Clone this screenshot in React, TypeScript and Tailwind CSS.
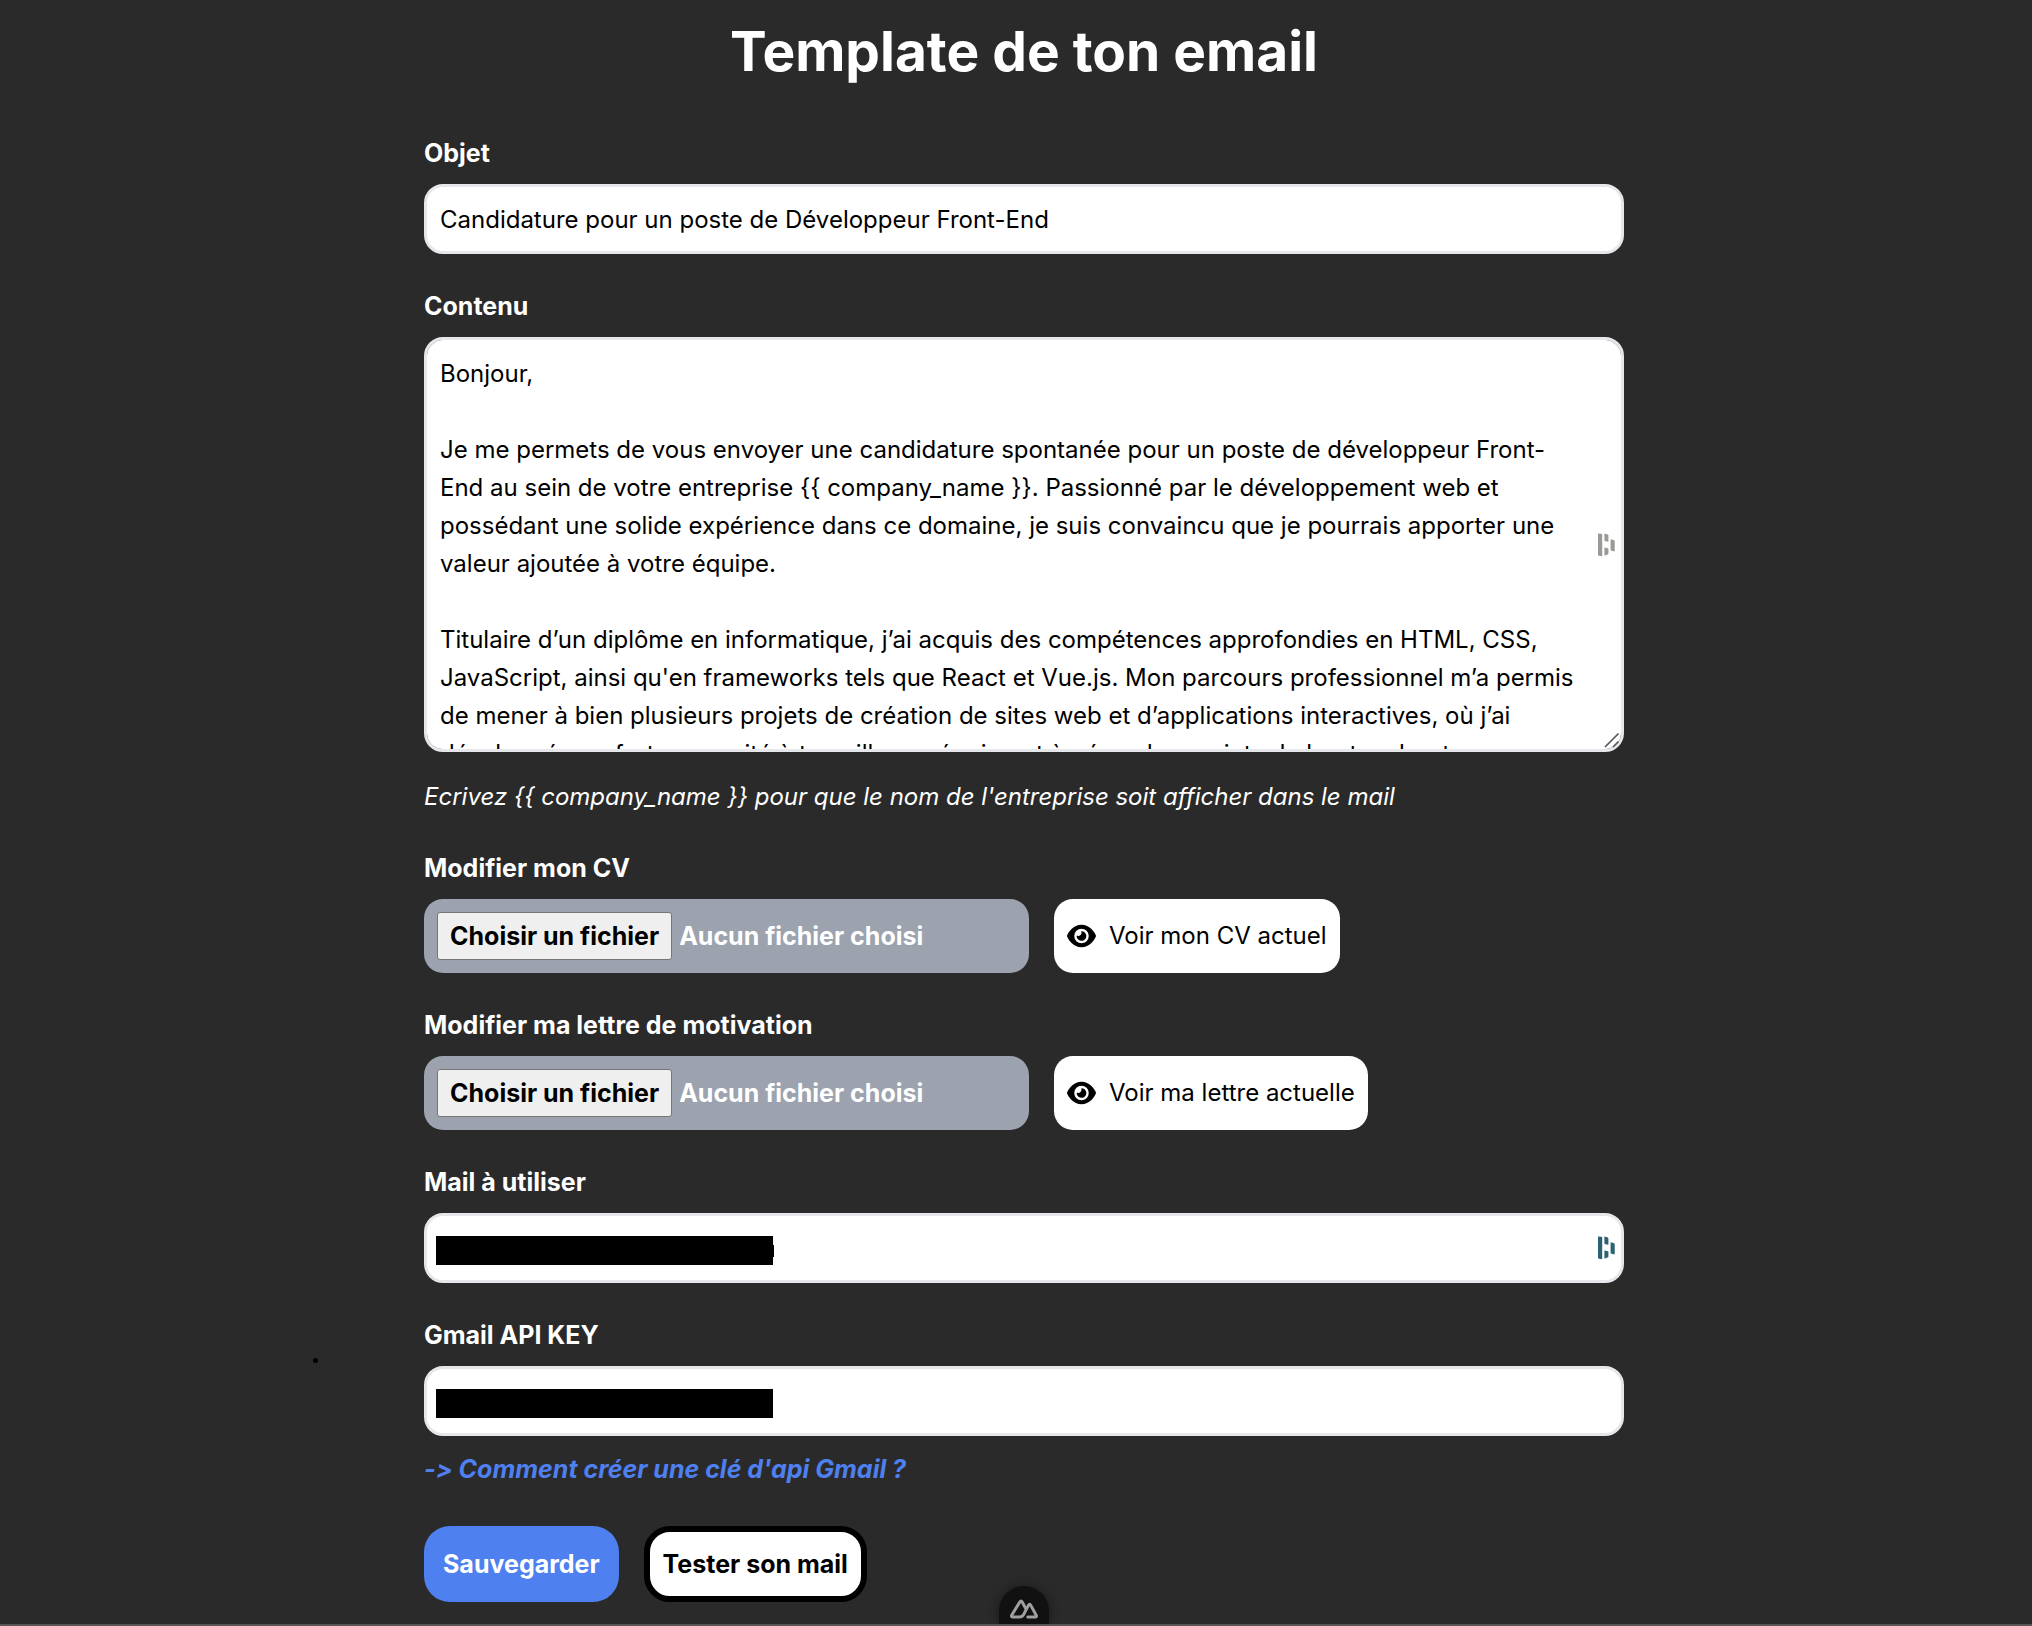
import React from "react";
import { FaEye } from "react-icons/fa6";

const MESSAGE = `Bonjour,

Je me permets de vous envoyer une candidature spontanée pour un poste de développeur Front-End au sein de votre entreprise {{ company_name }}. Passionné par le développement web et possédant une solide expérience dans ce domaine, je suis convaincu que je pourrais apporter une valeur ajoutée à votre équipe.

Titulaire d’un diplôme en informatique, j’ai acquis des compétences approfondies en HTML, CSS, JavaScript, ainsi qu'en frameworks tels que React et Vue.js. Mon parcours professionnel m’a permis de mener à bien plusieurs projets de création de sites web et d’applications interactives, où j’ai développé une forte capacité à travailler en équipe et à gérer des projets de bout en bout.`;

function PasswordManagerMark({ className }: { className: string }) {
  return (
    <svg viewBox="0 0 17 24" fill="currentColor" aria-hidden="true" className={`pointer-events-none absolute right-[9px] h-6 w-[17px] ${className}`}>
      <path d="M0 0.4L3 0.8C3.7 0.9 4.2 1.2 4.2 1.8V23.2L1 22.8C0.4 22.7 0 22.4 0 21.8Z" />
      <path d="M6.4 0.6L9.2 1.3C10 1.5 10.4 1.9 10.4 2.6V8.8L7.4 8.3C6.8 8.2 6.4 7.8 6.4 7.2Z" />
      <path d="M6.4 14.6L9.2 15.1C10 15.3 10.4 15.7 10.4 16.3V21L7.4 22.6L6.4 22.2Z" />
      <path d="M12.6 6.2L15.6 6.9C16.3 7.1 16.7 7.5 16.7 8.2V18.4L13.6 17.8C13 17.7 12.6 17.3 12.6 16.7Z" />
    </svg>
  );
}

const fieldClass =
  "block w-full rounded-[19px] border-[3px] border-[#e5e7eb] bg-white pl-[13px] text-[24px] leading-[38px] text-black outline-none";

function TextField({
  id,
  label,
  value,
  children,
}: {
  id: string;
  label: string;
  value?: string;
  children?: React.ReactNode;
}) {
  return (
    <div className="flex flex-col gap-3">
      <label htmlFor={id} className="font-bold">
        {label}
      </label>
      <div className="relative flex items-center">
        <input id={id} type="text" defaultValue={value} className={`${fieldClass} h-[70px] pr-[13px]`} />
        {children}
      </div>
    </div>
  );
}

function FileField({ id, label, action }: { id: string; label: string; action: string }) {
  return (
    <div className="flex flex-col gap-3">
      <label htmlFor={id} className="font-bold">
        {label}
      </label>
      <div className="flex gap-[25px]">
        <label
          htmlFor={id}
          className="flex w-[605px] cursor-pointer items-center gap-[7px] rounded-[19px] bg-[#9ca3af] px-[13px] py-[13px] font-bold"
        >
          <input id={id} type="file" className="sr-only" />
          <span className="rounded-[3px] border border-[#767676] bg-[#efefef] px-3 py-1 text-black">
            Choisir un fichier
          </span>
          <span>Aucun fichier choisi</span>
        </label>
        <button
          type="button"
          className="flex cursor-pointer items-center gap-[13px] rounded-[19px] bg-white px-[13px] text-[24px] text-black"
        >
          <FaEye className="h-[26px] w-[29px]" />
          {action}
        </button>
      </div>
    </div>
  );
}

function Redaction({ children }: { children?: React.ReactNode }) {
  return (
    <span className="pointer-events-none absolute top-[23px] left-3 flex h-[29px] w-[337px] items-center bg-black">
      {children}
    </span>
  );
}

export default function App() {
  return (
    <div className="relative min-h-screen overflow-hidden border-b-2 border-[#555555] bg-[#2a2a2a] pl-4 font-['Inter',sans-serif] text-[25px] leading-[38px] text-white [font-variant-ligatures:no-contextual]">
      <main className="mx-auto max-w-[1200px] pt-[19px] pb-[21px]">
        <h1 className="mb-[51px] text-center text-[55px] leading-[64px] font-bold">
          Template de ton email
        </h1>
        <form className="flex flex-col gap-[33px]" onSubmit={(e) => e.preventDefault()}>
          <TextField id="subject" label="Objet" value="Candidature pour un poste de Développeur Front-End" />

          <div className="flex flex-col gap-3">
            <label htmlFor="content" className="font-bold">
              Contenu
            </label>
            <div className="relative flex items-center">
              <textarea
                id="content"
                defaultValue={MESSAGE}
                aria-describedby="content-hint"
                className={`${fieldClass} h-[415px] resize-none pt-[15px] pr-10 [scrollbar-width:none]`}
              />
              <PasswordManagerMark className="text-[#9b9996]" />
              <svg
                viewBox="0 0 16 16"
                fill="none"
                stroke="#555555"
                strokeWidth="1.6"
                aria-hidden="true"
                className="pointer-events-none absolute right-1 bottom-1 size-4"
              >
                <path d="M1 15L14.5 1.5M9 15L14.5 9.5" />
              </svg>
            </div>
            <p id="content-hint" className="mt-[14px] text-[24px] italic">
              {"Ecrivez {{ company_name }} pour que le nom de l'entreprise soit afficher dans le mail"}
            </p>
          </div>

          <FileField id="cv" label="Modifier mon CV" action="Voir mon CV actuel" />
          <FileField id="letter" label="Modifier ma lettre de motivation" action="Voir ma lettre actuelle" />

          <TextField id="mail" label="Mail à utiliser">
            <Redaction>
              <span className="ml-auto h-3 w-px translate-x-full bg-black" />
            </Redaction>
            <PasswordManagerMark className="text-[#2b6173]" />
          </TextField>

          <div className="flex flex-col gap-[14px]">
            <TextField id="api-key" label="Gmail API KEY">
              <Redaction />
            </TextField>
            <a href="#api-key-help" className="self-start font-bold text-[#4f80f0] italic">
              {"-> Comment créer une clé d'api Gmail ?"}
            </a>
          </div>

          <div className="mt-[5px] flex gap-[25px]">
            <button
              type="submit"
              className="h-[76px] cursor-pointer rounded-[26px] bg-[#4f80f0] px-[19px] font-bold text-white"
            >
              Sauvegarder
            </button>
            <button
              type="button"
              className="h-[76px] cursor-pointer rounded-[26px] border-[6px] border-black bg-white px-[13px] font-bold text-black"
            >
              Tester son mail
            </button>
          </div>
        </form>
      </main>

      <span className="absolute top-[1358px] left-[313px] size-[5px] rounded-full bg-black" />

      <button
        type="button"
        aria-label="Nuxt DevTools"
        className="absolute bottom-0 left-1/2 ml-2 flex h-[38px] w-[50px] -translate-x-1/2 items-start justify-center rounded-t-full bg-[#111111] pt-[13px] shadow-[0_0_12px_rgba(0,0,0,0.4)]"
      >
        <svg viewBox="0 0 28 20" fill="none" stroke="#a0a0a0" strokeWidth="3" strokeLinejoin="round" strokeLinecap="round" className="h-5 w-7">
          <path d="M15.6 9.4L12.2 3Q11 1 9.8 3L1.7 16.2Q0.9 18 2.8 18H9.6Q12.2 18 13.5 15.8L18.4 6.4Q19.6 4.2 20.8 6.4L26.2 16.2Q27 18 25.2 18H17.8" />
        </svg>
      </button>
    </div>
  );
}
